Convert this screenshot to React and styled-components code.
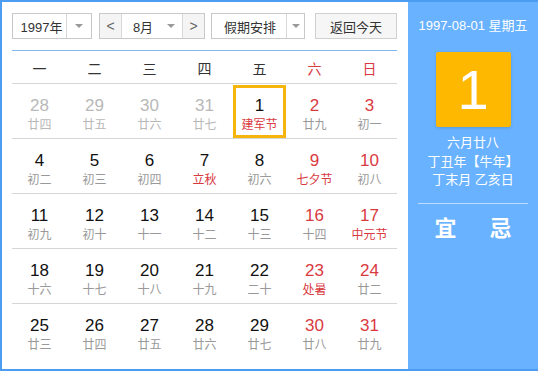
import React from 'react';
import styled, { createGlobalStyle } from 'styled-components';

const GlobalStyle = createGlobalStyle`
    html, body {
        margin: 0;
        padding: 0;
        background: #fff;
    }
    * {
        box-sizing: border-box;
    }
`;

const RED = '#d93a3f';
const CJK = `Arial, "Liberation Sans", "Noto Sans CJK SC", sans-serif`;

const Frame = styled.div`
    width: 538px;
    height: 371px;
    border: 2px solid #4c9cf1;
    border-right: none;
    display: flex;
    font-family: ${CJK};
    color: #333;
`;

const Main = styled.section`
    width: 406px;
    padding: 10px 11px 0 10px;
    background: #fff;
`;

const Toolbar = styled.div`
    display: flex;
    align-items: center;
    height: 27px;
    padding-top: 1px;
`;

const Select = styled.div`
    display: flex;
    align-items: stretch;
    height: 26px;
    width: ${p => p.width}px;
    margin-right: ${p => p.gap || 0}px;
    border: 1px solid #c9c9c9;
    background: #fff;
    font-size: 13px;
`;

const SelectLabel = styled.div`
    flex: 1;
    display: flex;
    align-items: center;
    justify-content: center;
    padding-left: ${p => p.pad || 0}px;
`;

const Caret = styled.div`
    width: ${p => p.w || 18}px;
    display: flex;
    align-items: center;
    justify-content: center;
    border-left: ${p => (p.divided ? '1px solid #d8d8d8' : 'none')};

    &::after {
        content: '';
        border-left: 4px solid transparent;
        border-right: 4px solid transparent;
        border-top: 4px solid #999;
    }
`;

const StepButton = styled.div`
    width: 22px;
    display: flex;
    align-items: center;
    justify-content: center;
    background: #f4f4f4;
    color: #666;
    font-size: 14px;
    border-${p => (p.side === 'left' ? 'right' : 'left')}: 1px solid #d8d8d8;
`;

const TodayButton = styled.div`
    margin-left: auto;
    width: 82px;
    height: 26px;
    display: flex;
    align-items: center;
    justify-content: center;
    border: 1px solid #d0d0d0;
    background: #f6f6f6;
    font-size: 13px;
    color: #333;
`;

const Divider = styled.div`
    height: 1px;
    background: #7fb7ee;
    margin-top: 11px;
`;

const WeekHeader = styled.div`
    display: grid;
    grid-template-columns: repeat(7, 55px);
    height: 33px;
    border-bottom: 1px solid #d6d6d6;
`;

const WeekDay = styled.div`
    display: flex;
    align-items: center;
    justify-content: center;
    font-size: 14px;
    padding-top: 1px;
    color: ${p => (p.weekend ? RED : '#333')};
`;

const Week = styled.div`
    display: grid;
    grid-template-columns: repeat(7, 55px);
    height: 55px;
    border-bottom: ${p => (p.last ? 'none' : '1px solid #d6d6d6')};
`;

const Day = styled.div`
    margin: 1px 1px 0;
    display: flex;
    flex-direction: column;
    align-items: center;
    padding-top: ${p => (p.selected ? 8 : 11)}px;
    border: ${p => (p.selected ? '3px solid #f5b50c' : 'none')};
`;

const DayNum = styled.div`
    font-family: Arial, "Liberation Sans", sans-serif;
    font-size: 17px;
    line-height: 19px;
    color: ${p => p.color};
`;

const Lunar = styled.div`
    font-size: 12px;
    line-height: 16px;
    margin-top: 2px;
    color: ${p => p.color};
`;

const Side = styled.aside`
    flex: 1;
    background: #69b2ff;
    color: #fff;
    display: flex;
    flex-direction: column;
    align-items: center;
    padding-top: 15px;
`;

const SideDate = styled.div`
    font-size: 13px;
    line-height: 17px;
`;

const BigDay = styled.div`
    width: 75px;
    height: 75px;
    margin-top: 18px;
    background: #ffb800;
    border-radius: 2px;
    box-shadow: 0 1px 3px rgba(0, 0, 0, 0.15);
    display: flex;
    align-items: center;
    justify-content: center;
    font-family: Arial, "Liberation Sans", sans-serif;
    font-size: 56px;
    color: #fff;
`;

const SideLines = styled.div`
    margin-top: 7px;
    text-align: center;
    font-size: 13px;
    line-height: 18.5px;
`;

const SideRule = styled.div`
    width: 110px;
    height: 1px;
    background: rgba(255, 255, 255, 0.55);
    margin-top: 13px;
`;

const Verdicts = styled.div`
    display: flex;
    gap: 33px;
    margin-top: 6px;
    font-size: 22px;
    font-weight: bold;
`;

const weekDays = ['一', '二', '三', '四', '五', '六', '日'];

// [day, lunar, flags] flags: o = other month, f = festival lunar text, s = selected
const weeks = [
    [[28, '廿四', 'o'], [29, '廿五', 'o'], [30, '廿六', 'o'], [31, '廿七', 'o'], [1, '建军节', 'fs'], [2, '廿九'], [3, '初一']],
    [[4, '初二'], [5, '初三'], [6, '初四'], [7, '立秋', 'f'], [8, '初六'], [9, '七夕节', 'f'], [10, '初八']],
    [[11, '初九'], [12, '初十'], [13, '十一'], [14, '十二'], [15, '十三'], [16, '十四'], [17, '中元节', 'f']],
    [[18, '十六'], [19, '十七'], [20, '十八'], [21, '十九'], [22, '二十'], [23, '处暑', 'f'], [24, '廿二']],
    [[25, '廿三'], [26, '廿四'], [27, '廿五'], [28, '廿六'], [29, '廿七'], [30, '廿八'], [31, '廿九']],
];

function Cell({ data, col }) {
    const [n, lunar, flags = ''] = data;
    const other = flags.includes('o');
    const weekend = col >= 5;
    const numColor = other ? '#b8b8b8' : weekend ? RED : '#111';
    const lunarColor = other ? '#b8b8b8' : flags.includes('f') ? RED : '#999';
    return (
        <Day selected={flags.includes('s')}>
            <DayNum color={numColor}>{n}</DayNum>
            <Lunar color={lunarColor}>{lunar}</Lunar>
        </Day>
    );
}

export default function App() {
    return (
        <>
            <GlobalStyle />
            <Frame>
                <Main>
                    <Toolbar>
                        <Select width={80} gap={7}>
                            <SelectLabel pad={4}>1997年</SelectLabel>
                            <Caret divided w={25} />
                        </Select>
                        <Select width={106} gap={6}>
                            <StepButton side="left">&lt;</StepButton>
                            <SelectLabel pad={4}>8月</SelectLabel>
                            <Caret w={22} />
                            <StepButton side="right">&gt;</StepButton>
                        </Select>
                        <Select width={94}>
                            <SelectLabel pad={2}>假期安排</SelectLabel>
                            <Caret divided w={18} />
                        </Select>
                        <TodayButton>返回今天</TodayButton>
                    </Toolbar>
                    <Divider />
                    <WeekHeader>
                        {weekDays.map((d, i) => (
                            <WeekDay key={d} weekend={i >= 5}>{d}</WeekDay>
                        ))}
                    </WeekHeader>
                    {weeks.map((w, r) => (
                        <Week key={r} last={r === weeks.length - 1}>
                            {w.map((d, c) => <Cell key={c} data={d} col={c} />)}
                        </Week>
                    ))}
                </Main>
                <Side>
                    <SideDate>1997-08-01 星期五</SideDate>
                    <BigDay>1</BigDay>
                    <SideLines>
                        <div>六月廿八</div>
                        <div>丁丑年【牛年】</div>
                        <div>丁末月 乙亥日</div>
                    </SideLines>
                    <SideRule />
                    <Verdicts>
                        <span>宜</span>
                        <span>忌</span>
                    </Verdicts>
                </Side>
            </Frame>
        </>
    );
}
